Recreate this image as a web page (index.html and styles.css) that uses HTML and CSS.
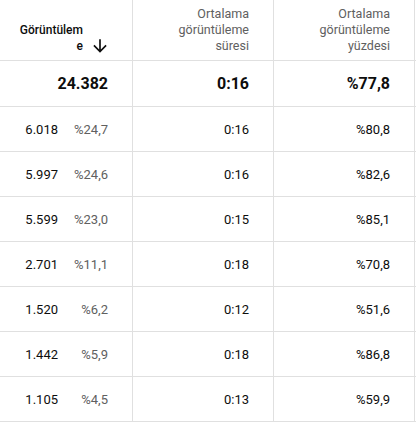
FILE: index.html
```html
<!DOCTYPE html>
<html lang="tr">
<head>
<meta charset="utf-8">
<link rel="stylesheet" href="styles.css">
</head>
<body>
<div class="table">
  <div class="row head">
    <div class="cell sortcell">
      <span class="sorttitle">Görüntüleme</span>
      <svg class="arrow" viewBox="0 0 24 24"><path d="M20 12l-1.41-1.41L13 16.17V4h-2v12.17l-5.58-5.59L4 12l8 8 8-8z"/></svg>
    </div>
    <div class="cell htext">Ortalama görüntüleme süresi</div>
    <div class="cell htext">Ortalama görüntüleme yüzdesi</div>
    <div class="cell spacer"></div>
  </div>
  <div class="row total">
    <div class="cell">24.382</div>
    <div class="cell">0:16</div>
    <div class="cell">%77,8</div>
    <div class="cell spacer"></div>
  </div>
  <div class="row data">
    <div class="cell"><span class="num">6.018</span><span class="pct">%24,7</span></div>
    <div class="cell">0:16</div>
    <div class="cell">%80,8</div>
    <div class="cell spacer"></div>
  </div>
  <div class="row data">
    <div class="cell"><span class="num">5.997</span><span class="pct">%24,6</span></div>
    <div class="cell">0:16</div>
    <div class="cell">%82,6</div>
    <div class="cell spacer"></div>
  </div>
  <div class="row data">
    <div class="cell"><span class="num">5.599</span><span class="pct">%23,0</span></div>
    <div class="cell">0:15</div>
    <div class="cell">%85,1</div>
    <div class="cell spacer"></div>
  </div>
  <div class="row data">
    <div class="cell"><span class="num">2.701</span><span class="pct">%11,1</span></div>
    <div class="cell">0:18</div>
    <div class="cell">%70,8</div>
    <div class="cell spacer"></div>
  </div>
  <div class="row data">
    <div class="cell"><span class="num">1.520</span><span class="pct">%6,2</span></div>
    <div class="cell">0:12</div>
    <div class="cell">%51,6</div>
    <div class="cell spacer"></div>
  </div>
  <div class="row data">
    <div class="cell"><span class="num">1.442</span><span class="pct">%5,9</span></div>
    <div class="cell">0:18</div>
    <div class="cell">%86,8</div>
    <div class="cell spacer"></div>
  </div>
  <div class="row data">
    <div class="cell"><span class="num">1.105</span><span class="pct">%4,5</span></div>
    <div class="cell">0:13</div>
    <div class="cell">%59,9</div>
    <div class="cell spacer"></div>
  </div>
</div>
</body>
</html>
```

FILE: styles.css
```css
html, body {
  margin: 0;
  padding: 0;
  background: #fff;
}
body {
  font-family: Roboto, "Liberation Sans", sans-serif;
  color: #0d0d0d;
  width: 416px;
}
.table {
  display: flex;
  flex-direction: column;
}
.row {
  display: grid;
  grid-template-columns: 133px 141px 141px 1fr;
  border-bottom: 1px solid #e0e0e0;
}
.cell {
  border-right: 1px solid #e0e0e0;
  padding-right: 24px;
  display: flex;
  justify-content: flex-end;
  align-items: center;
  text-align: right;
}
.cell.spacer {
  border-right: none;
  padding: 0;
}
.head {
  height: 60px;
}
.head .cell {
  align-items: flex-end;
  padding-bottom: 6px;
  font-size: 12.5px;
  line-height: 16px;
  color: #606060;
}
.head .htext {
  padding-left: 30px;
}
.head .sortcell {
  padding-right: 22px;
  color: #0d0d0d;
  font-weight: 500;
  font-size: 12px;
}
.sorttitle {
  width: 64px;
  word-break: break-all;
  text-align: right;
}
.arrow {
  width: 20px;
  height: 20px;
  margin-left: 7px;
  margin-bottom: -2px;
  fill: #0d0d0d;
  flex: none;
}
.total {
  height: 45px;
  font-size: 16px;
  font-weight: 700;
}
.data {
  height: 44px;
  font-size: 13px;
}
.pct {
  width: 50px;
  text-align: right;
  color: #606060;
}
```
